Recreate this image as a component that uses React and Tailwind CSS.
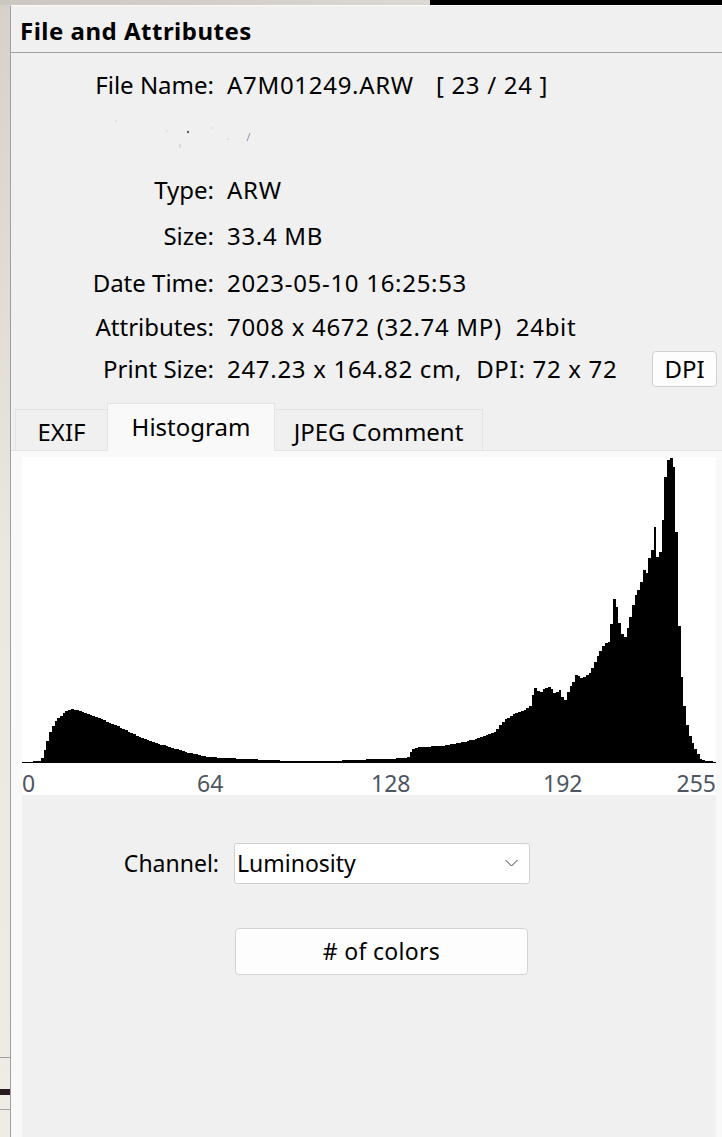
import React from 'react';

const HIST_W = 694;
const HIST_H = 306;
const LEFT = 22;
const TOP = 457;

// luminosity curve traced as [x, y] points in window pixels
const outline = [
  [22, 762], [40, 761], [43, 757], [45, 750], [50, 733], [55, 722], [60, 717], [65, 712],
  [72, 709], [80, 711], [90, 714], [100, 718], [110, 723], [120, 727], [130, 732], [140, 737],
  [150, 741], [160, 744], [170, 747], [180, 750], [190, 753], [200, 755], [210, 757], [225, 758],
  [250, 759], [290, 761], [330, 761], [350, 760], [380, 759], [408, 758], [412, 750], [418, 747],
  [440, 746], [460, 743], [480, 738], [495, 732], [505, 720], [515, 713], [525, 710], [530, 707],
  [535, 687], [540, 693], [545, 688], [550, 687], [555, 693], [560, 690], [565, 702], [570, 687],
  [575, 680], [577, 672], [580, 678], [585, 677], [590, 673], [595, 663], [600, 652], [605, 643],
  [610, 642], [614, 598], [618, 610], [621, 632], [625, 638], [628, 628], [631, 615], [635, 597],
  [640, 587], [643, 577], [645, 565], [647, 573], [650, 555], [653, 548], [655, 527], [657, 557],
  [660, 557], [663, 522], [666, 475], [669, 457], [672, 458], [675, 472], [677, 543], [680, 647],
  [683, 690], [686, 717], [689, 733], [693, 743], [697, 752], [702, 760], [716, 762],
];

function histogramPath() {
  const bw = HIST_W / 256;
  let d = `M0 ${HIST_H}`;
  for (let v = 0; v < 256; v++) {
    const x = LEFT + (v + 0.5) * bw;
    let y = outline[outline.length - 1][1];
    for (let i = 1; i < outline.length; i++) {
      if (x <= outline[i][0]) {
        const [x0, y0] = outline[i - 1];
        const [x1, y1] = outline[i];
        y = y0 + ((y1 - y0) * (x - x0)) / (x1 - x0);
        break;
      }
    }
    const top = (y - TOP).toFixed(1);
    d += ` L${(v * bw).toFixed(2)} ${top} L${((v + 1) * bw).toFixed(2)} ${top}`;
  }
  return d + ` L${HIST_W} ${HIST_H} Z`;
}

const InfoRow = ({ label, className, children }) => (
  <div className={`flex items-center ${className}`}>
    <span className="w-[203px] flex-none text-right">{label}</span>
    <span className="ml-[13px] whitespace-pre tracking-[0.7px]">{children}</span>
  </div>
);

const Tab = ({ label, active, className }) =>
  active ? (
    <div className={`relative z-10 -mb-px h-[48px] flex items-center justify-center pb-[2px] bg-[#f9f9f9] border border-b-0 border-[#e3e3e3] ${className}`}>
      {label}
    </div>
  ) : (
    <div className={`h-[41px] flex items-center justify-center pt-[4px] bg-[#f0f0f0] border border-b-0 border-[#e3e3e3] ${className}`}>
      {label}
    </div>
  );

export default function App() {
  const path = histogramPath();

  return (
    <div className="w-[722px] h-[1137px] overflow-hidden flex flex-col bg-[#e6e2db] text-[23px] leading-none text-black font-['Noto_Sans','Open_Sans',sans-serif]">
      {/* desktop behind the window */}
      <div className="h-[5px] flex-none flex">
        <div className="w-[430px] bg-gradient-to-r from-[#cbc6bf] to-[#dcd8d2]" />
        <div className="flex-1 bg-black" />
      </div>

      <div className="flex-1 flex min-h-0">
        <div className="w-[10px] flex-none flex flex-col bg-gradient-to-b from-[#d6d1ca] via-[#ebe7e1] to-[#efebe5]">
          <div className="h-[1052px]" />
          <div className="h-px bg-[#9d9d9d]" />
          <div className="h-[31px]" />
          <div className="h-[6px] bg-[#2a1c1c]" />
          <div className="h-[14px]" />
          <div className="h-px bg-[#a5a5a5]" />
        </div>

        {/* window */}
        <div className="flex-1 flex flex-col min-w-0 bg-[#f0f0f0] border-l border-t border-l-[#a0a0a0] border-t-[#fafafa]">
          <div className="h-[47px] flex-none flex items-center pl-[9px] pt-[3px] text-[24px] tracking-[0.5px] font-bold border-b border-[#a0a0a0]">
            File and Attributes
          </div>

          <div className="flex-none flex flex-col pt-[10px] text-[24px]">
            <InfoRow label="File Name:" className="h-[44px]">
              A7M01249.ARW<span className="ml-[22px]">[ 23 / 24 ]</span>
            </InfoRow>
            <div className="h-[60px]">
              <svg width="300" height="60" viewBox="0 0 300 60">
                <circle cx="105" cy="14" r="0.8" fill="#c9c9c9" />
                <circle cx="156" cy="24" r="0.8" fill="#cfcfcf" />
                <circle cx="177" cy="25" r="1.2" fill="#5a6170" />
                <line x1="169" y1="37" x2="169" y2="41" stroke="#d2c4b0" strokeWidth="1" />
                <circle cx="201" cy="21" r="0.8" fill="#d0d0d0" />
                <circle cx="217" cy="32" r="0.8" fill="#c8c8c8" />
                <line x1="236" y1="34" x2="239" y2="26" stroke="#8a97b4" strokeWidth="1" />
              </svg>
            </div>
            <InfoRow label="Type:" className="h-[45px]">ARW</InfoRow>
            <InfoRow label="Size:" className="h-[47px]">33.4 MB</InfoRow>
            <InfoRow label="Date Time:" className="h-[47px]">2023-05-10 16:25:53</InfoRow>
            <InfoRow label="Attributes:" className="h-[41px]">7008 x 4672 (32.74 MP)  24bit</InfoRow>
            <div className="h-[44px] flex items-center">
              <span className="w-[203px] flex-none text-right">Print Size:</span>
              <span className="ml-[13px] whitespace-pre tracking-[0.7px]">247.23 x 164.82 cm,  DPI: 72 x 72</span>
              <button className="ml-auto mr-[5px] w-[65px] h-[36px] flex items-center justify-center bg-[#fdfdfd] border border-[#d0d0d0] rounded-[4px]">
                DPI
              </button>
            </div>
          </div>

          {/* tabs */}
          <div className="mt-[11px] h-[48px] flex-none flex items-end pl-[4px] text-[24px]">
            <Tab label="EXIF" className="w-[93px]" />
            <Tab label="Histogram" active className="w-[168px] -ml-px" />
            <Tab label="JPEG Comment" className="w-[209px] -ml-px" />
          </div>

          <div className="flex-1 flex flex-col bg-[#f9f9f9] border-t border-[#e3e3e3] pl-[11px] pr-[6px] pt-[6px]">
            <div className="flex-1 flex flex-col bg-[#f0f0f0]">
              <div className="h-[338px] flex-none flex flex-col bg-white">
                <svg width={HIST_W} height={HIST_H} viewBox={`0 0 ${HIST_W} ${HIST_H}`} shapeRendering="crispEdges">
                  <path d={path} fill="#000" />
                </svg>
                <div className="relative flex-1 text-[#4f5662]">
                  <span className="absolute left-0 top-[9px]">0</span>
                  <span className="absolute left-[175px] top-[9px]">64</span>
                  <span className="absolute left-[349px] top-[9px]">128</span>
                  <span className="absolute left-[521px] top-[9px]">192</span>
                  <span className="absolute right-0 top-[9px]">255</span>
                </div>
              </div>

              <div className="mt-[48px] flex items-center">
                <span className="w-[197px] flex-none text-right">Channel:</span>
                <div className="ml-[15px] w-[296px] h-[41px] flex items-center justify-between pl-[2px] pr-[11px] bg-white border border-[#d0d0d0] rounded-[3px]">
                  <span>Luminosity</span>
                  <svg width="13" height="8" viewBox="0 0 13 8" className="mb-[2px]">
                    <polyline points="0.5,1 6.5,7 12.5,1" fill="none" stroke="#3a3a3a" strokeWidth="1" />
                  </svg>
                </div>
              </div>

              <button className="mt-[44px] ml-[213px] w-[293px] h-[47px] flex items-center justify-center tracking-[0.3px] bg-[#fdfdfd] border border-[#d3d3d3] rounded-[4px]">
                # of colors
              </button>
            </div>
          </div>
        </div>
      </div>
    </div>
  );
}
